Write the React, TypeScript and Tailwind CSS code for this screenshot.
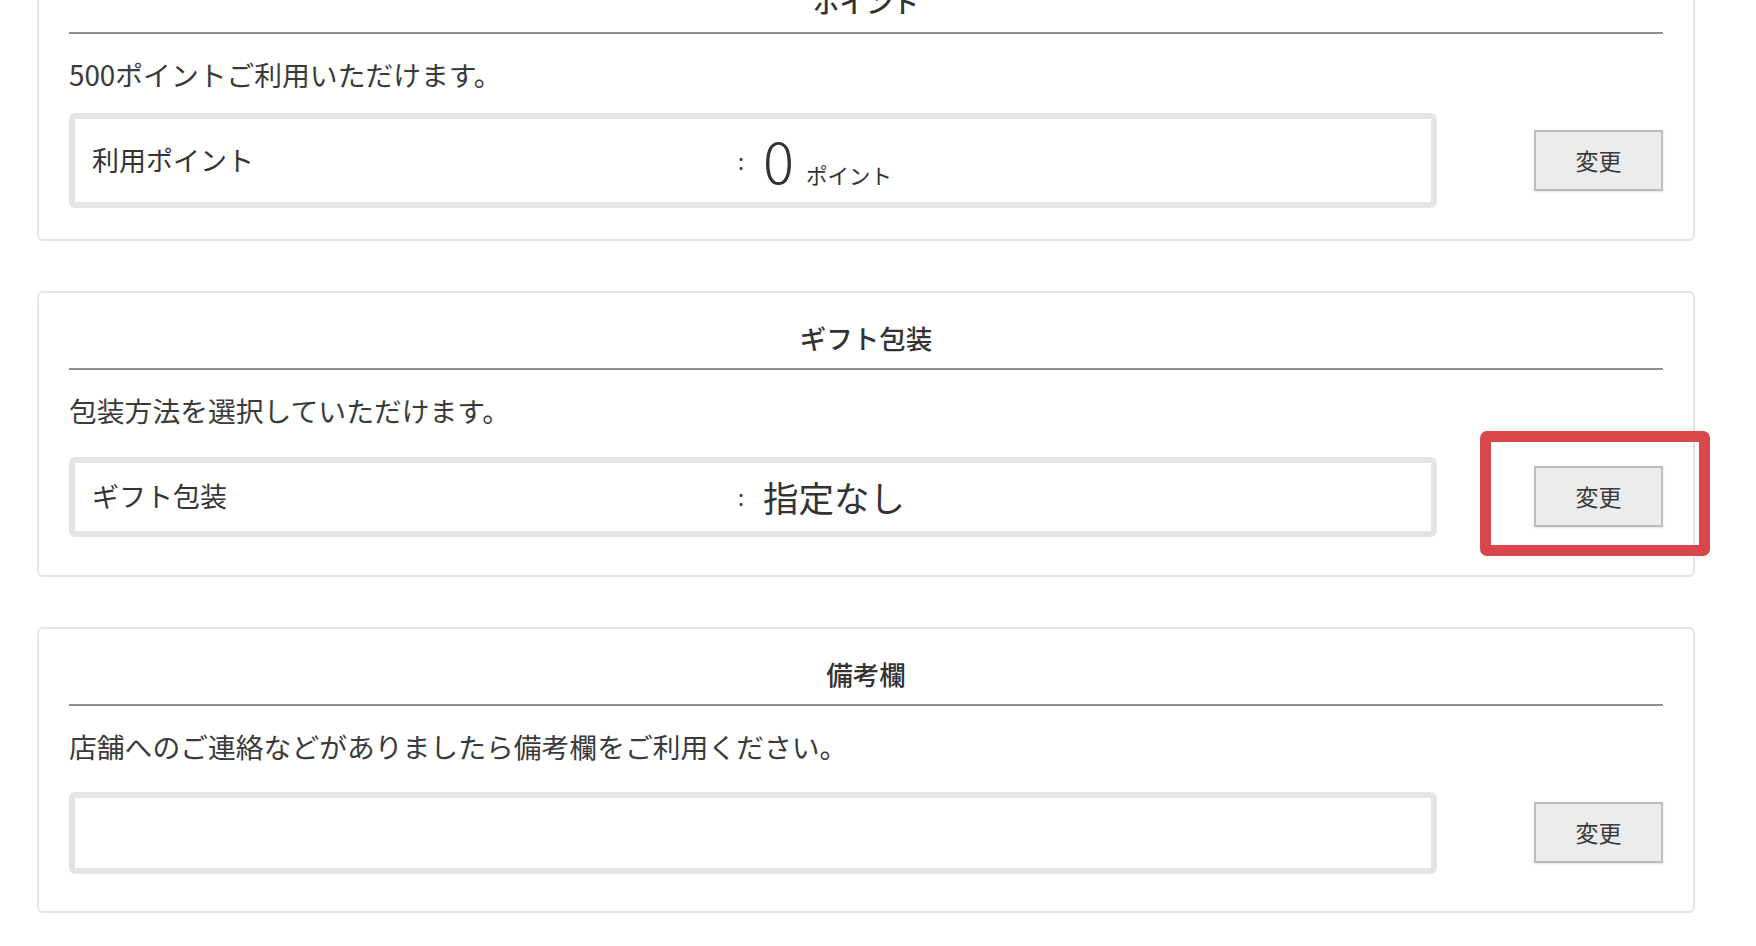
const font = { fontFamily: '"Noto Sans CJK JP", "Noto Sans", sans-serif' };

function ChangeButton() {
  return (
    <button className="w-[129px] h-[61px] border-2 border-[#bdbdbd] bg-[#ebebeb] text-[23px] leading-none text-[#3a3a3a] shadow-[0_1px_2px_rgba(0,0,0,0.12)]">
      変更
    </button>
  );
}

function Panel({
  title,
  desc,
  children,
  highlight = false,
}: {
  title: string;
  desc: string;
  children?: React.ReactNode;
  highlight?: boolean;
}) {
  return (
    <section className="w-[1658px] border-2 border-[#e4e4e4] rounded-[6px] bg-white px-[30px] pt-[27px] pb-[31px]">
      <h2 className="text-center text-[26.5px] leading-[36px] font-medium text-[#333] pb-[12px]">{title}</h2>
      <div className="h-[2px] bg-[#8f8f8f]" />
      <p className="mt-[22px] text-[27.8px] leading-[36px] text-[#3a3a3a]">{desc}</p>
      <div className="mt-[21px] h-[95px] flex items-center justify-between">
        {children}
        <div className="relative">
          <ChangeButton />
          {highlight && (
            <div className="absolute -left-[54px] -right-[47px] -top-[35px] -bottom-[29px] border-[11px] border-[#d9474a] rounded-[7px]" />
          )}
        </div>
      </div>
    </section>
  );
}

function Field({ children, className = '' }: { children?: React.ReactNode; className?: string }) {
  return (
    <div className={`w-[1368px] border-[6px] border-[#e4e4e4] rounded-[6px] bg-white flex items-center pl-[17px] ${className}`}>
      {children}
    </div>
  );
}

export default function App() {
  return (
    <div className="w-[1756px] h-[946px] overflow-hidden bg-white" style={font}>
      <div className="-mt-[45px] ml-[37px] flex flex-col gap-[50px]">
        <Panel title="ポイント" desc="500ポイントご利用いただけます。">
          <Field className="h-[95px]">
            <span className="w-[637px] text-[27px] text-[#333]">利用ポイント</span>
            <span className="w-[24px] text-center text-[22px] text-[#333]">:</span>
            <span className="ml-[10px] flex items-baseline gap-[12px] text-[#333]">
              <span className="text-[58px] leading-none font-light">0</span>
              <span className="text-[21.5px]">ポイント</span>
            </span>
          </Field>
        </Panel>

        <Panel title="ギフト包装" desc="包装方法を選択していただけます。" highlight>
          <Field className="h-[80px]">
            <span className="w-[637px] text-[27px] text-[#333]">ギフト包装</span>
            <span className="w-[24px] text-center text-[22px] text-[#333]">:</span>
            <span className="ml-[10px] text-[35.5px] leading-none text-[#333]">指定なし</span>
          </Field>
        </Panel>

        <Panel title="備考欄" desc="店舗へのご連絡などがありましたら備考欄をご利用ください。">
          <Field className="h-[82px]" />
        </Panel>
      </div>
    </div>
  );
}
